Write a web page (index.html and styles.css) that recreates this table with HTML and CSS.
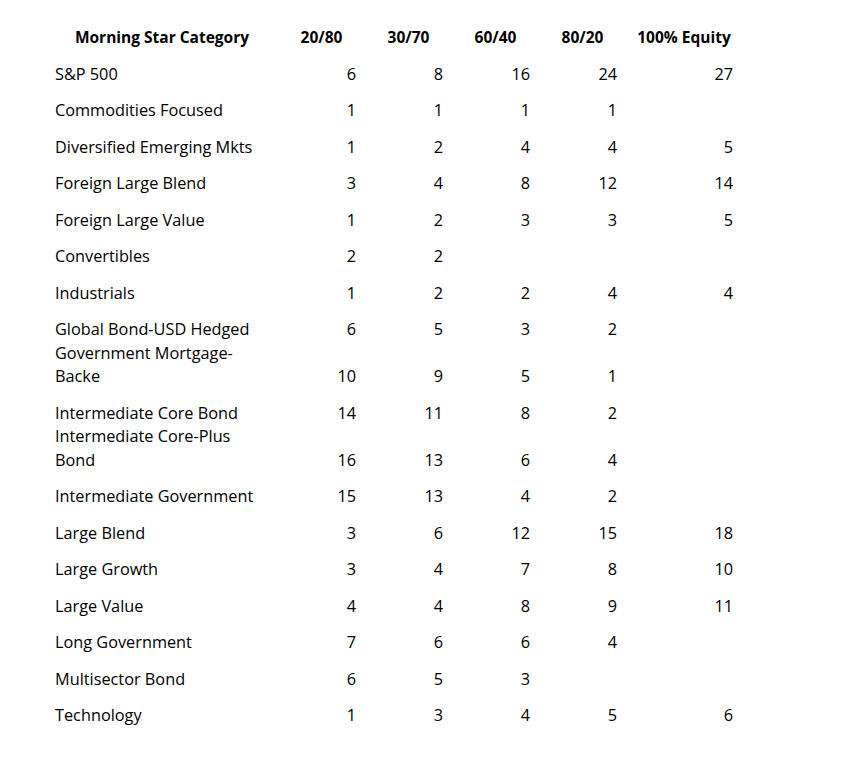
FILE: index.html
```html
<!DOCTYPE html>
<html>
<head>
<meta charset="utf-8">
<link rel="stylesheet" href="styles.css">
</head>
<body>
<table class="grid">
  <colgroup>
    <col class="c-cat"><col class="c-num"><col class="c-num"><col class="c-num"><col class="c-num"><col class="c-eq">
  </colgroup>
  <thead>
    <tr>
      <th>Morning Star Category</th><th>20/80</th><th>30/70</th><th>60/40</th><th>80/20</th><th>100% Equity</th>
    </tr>
  </thead>
  <tbody>
    <tr><td>S&amp;P 500</td><td>6</td><td>8</td><td>16</td><td>24</td><td>27</td></tr>
    <tr><td>Commodities Focused</td><td>1</td><td>1</td><td>1</td><td>1</td><td></td></tr>
    <tr><td>Diversified Emerging Mkts</td><td>1</td><td>2</td><td>4</td><td>4</td><td>5</td></tr>
    <tr><td>Foreign Large Blend</td><td>3</td><td>4</td><td>8</td><td>12</td><td>14</td></tr>
    <tr><td>Foreign Large Value</td><td>1</td><td>2</td><td>3</td><td>3</td><td>5</td></tr>
    <tr><td>Convertibles</td><td>2</td><td>2</td><td></td><td></td><td></td></tr>
    <tr><td>Industrials</td><td>1</td><td>2</td><td>2</td><td>4</td><td>4</td></tr>
    <tr><td>Global Bond-USD Hedged</td><td>6</td><td>5</td><td>3</td><td>2</td><td></td></tr>
    <tr class="tall"><td>Government Mortgage-<br>Backe</td><td>10</td><td>9</td><td>5</td><td>1</td><td></td></tr>
    <tr><td>Intermediate Core Bond</td><td>14</td><td>11</td><td>8</td><td>2</td><td></td></tr>
    <tr class="tall"><td>Intermediate Core-Plus<br>Bond</td><td>16</td><td>13</td><td>6</td><td>4</td><td></td></tr>
    <tr><td>Intermediate Government</td><td>15</td><td>13</td><td>4</td><td>2</td><td></td></tr>
    <tr><td>Large Blend</td><td>3</td><td>6</td><td>12</td><td>15</td><td>18</td></tr>
    <tr><td>Large Growth</td><td>3</td><td>4</td><td>7</td><td>8</td><td>10</td></tr>
    <tr><td>Large Value</td><td>4</td><td>4</td><td>8</td><td>9</td><td>11</td></tr>
    <tr><td>Long Government</td><td>7</td><td>6</td><td>6</td><td>4</td><td></td></tr>
    <tr><td>Multisector Bond</td><td>6</td><td>5</td><td>3</td><td></td><td></td></tr>
    <tr><td>Technology</td><td>1</td><td>3</td><td>4</td><td>5</td><td>6</td></tr>
  </tbody>
</table>
</body>
</html>
```
FILE: styles.css
```css
html, body {
  margin: 0;
  padding: 0;
  background: #ffffff;
}
body {
  font-family: "Open Sans", "Noto Sans", sans-serif;
  font-size: 16.3px;
  color: #000000;
}
.grid {
  border-collapse: collapse;
  border-spacing: 0;
  table-layout: fixed;
  margin: 13px 0 0 46px;
  width: 696px;
}
.c-cat { width: 232px; }
.c-num { width: 87px; }
.c-eq { width: 116px; }
.grid th,
.grid td {
  height: 36.5px;
  padding: 0 9px 0 9px;
  line-height: 23.5px;
  vertical-align: bottom;
  white-space: nowrap;
  box-sizing: border-box;
}
.grid th {
  font-weight: 700;
  font-size: 15.5px;
  text-align: center;
}
.grid td {
  font-weight: 400;
  text-align: right;
}
.grid td:first-child {
  text-align: left;
}
.grid tr.tall td {
  height: 47px;
}
```
